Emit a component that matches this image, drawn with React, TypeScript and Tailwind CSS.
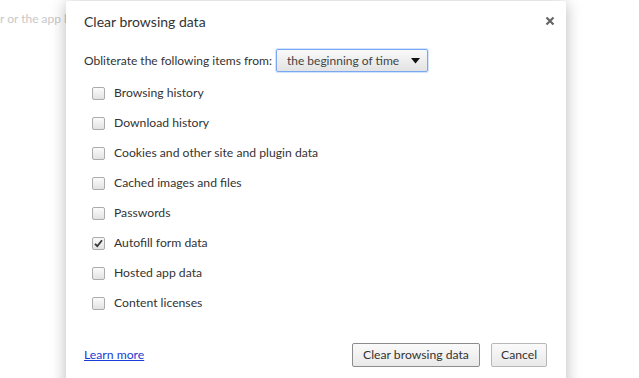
import React, { useState } from 'react';

const items: { label: string; checked: boolean }[] = [
  { label: 'Browsing history', checked: false },
  { label: 'Download history', checked: false },
  { label: 'Cookies and other site and plugin data', checked: false },
  { label: 'Cached images and files', checked: false },
  { label: 'Passwords', checked: false },
  { label: 'Autofill form data', checked: true },
  { label: 'Hosted app data', checked: false },
  { label: 'Content licenses', checked: false },
];

const CheckRow: React.FC<{ label: string; checked: boolean; onToggle: () => void }> = ({ label, checked, onToggle }) => (
  <label className="flex items-center h-[30px] cursor-default" onClick={onToggle}>
    <span className="w-[13px] h-[13px] ml-[8px] mr-[9px] rounded-[2px] border border-[#ababab] bg-gradient-to-b from-[#fbfbfb] to-[#e2e2e2] flex items-center justify-center">
      {checked && (
        <svg width="11" height="11" viewBox="0 0 11 11">
          <path d="M2 5.8 L4.3 8.2 L9 2.3" fill="none" stroke="#333" strokeWidth="1.8" />
        </svg>
      )}
    </span>
    <span className="text-[12.2px] text-[#333]">{label}</span>
  </label>
);

const App: React.FC = () => {
  const [checks, setChecks] = useState<boolean[]>(items.map((i) => i.checked));

  return (
    <div
      className="relative w-[639px] h-[378px] overflow-hidden bg-white"
      style={{ fontFamily: 'Lato, "Noto Sans", sans-serif' }}
    >
      <div className="pt-[10px] text-[12px] text-[#c8c8c8] whitespace-nowrap">r or the app l</div>

      {/* dialog */}
      <div className="absolute left-[66px] top-[1px] w-[500px] h-[400px] bg-white rounded-[2px] shadow-[0_2px_16px_rgba(0,0,0,0.28)] flex flex-col px-[18px]">
        <div className="flex items-start justify-between pt-[11px]">
          <h2 className="text-[14px] text-[#333] leading-[20px]">Clear browsing data</h2>
          <button className="mt-[3px] -mr-[8px] w-[12px] h-[12px] flex items-center justify-center">
            <svg width="10" height="10" viewBox="0 0 10 10">
              <path d="M1.5 1.5 L8.5 8.5 M8.5 1.5 L1.5 8.5" stroke="#666" strokeWidth="2.2" />
            </svg>
          </button>
        </div>

        <div className="flex items-center mt-[17px] text-[12px] text-[#333]">
          <span className="whitespace-nowrap">Obliterate the following items from:</span>
          <div className="ml-[4px] w-[152px] h-[23px] border border-[#7aa7f2] rounded-[2px] bg-gradient-to-b from-[#f9f9f9] to-[#e3e3e3] flex items-center justify-between pl-[10px] pr-[7px] text-[#444] shadow-[0_0_0_1px_rgba(77,144,254,0.25)]">
            <span className="whitespace-nowrap">the beginning of time</span>
            <svg width="9" height="6" viewBox="0 0 9 6">
              <path d="M0 0 H9 L4.5 5.5 Z" fill="#111" />
            </svg>
          </div>
        </div>

        <div className="mt-[6px] flex flex-col">
          {items.map((item, i) => (
            <CheckRow
              key={item.label}
              label={item.label}
              checked={checks[i]}
              onToggle={() => setChecks((c) => c.map((v, j) => (j === i ? !v : v)))}
            />
          ))}
        </div>

        <div className="flex items-center justify-between mt-[25px] mr-[1px]">
          <a href="#" className="text-[12.2px] text-[#1a3bd6] underline">Learn more</a>
          <div className="flex gap-[11px]">
            <button className="w-[128px] h-[24px] text-[12.2px] text-[#333] border border-[#8c8c8c] rounded-[2px] bg-gradient-to-b from-[#fafafa] to-[#e9e9e9] whitespace-nowrap">
              Clear browsing data
            </button>
            <button className="w-[56px] h-[24px] text-[12.2px] text-[#333] border border-[#b8b8b8] rounded-[2px] bg-gradient-to-b from-[#fafafa] to-[#e9e9e9]">
              Cancel
            </button>
          </div>
        </div>
      </div>
    </div>
  );
};

export default App;
